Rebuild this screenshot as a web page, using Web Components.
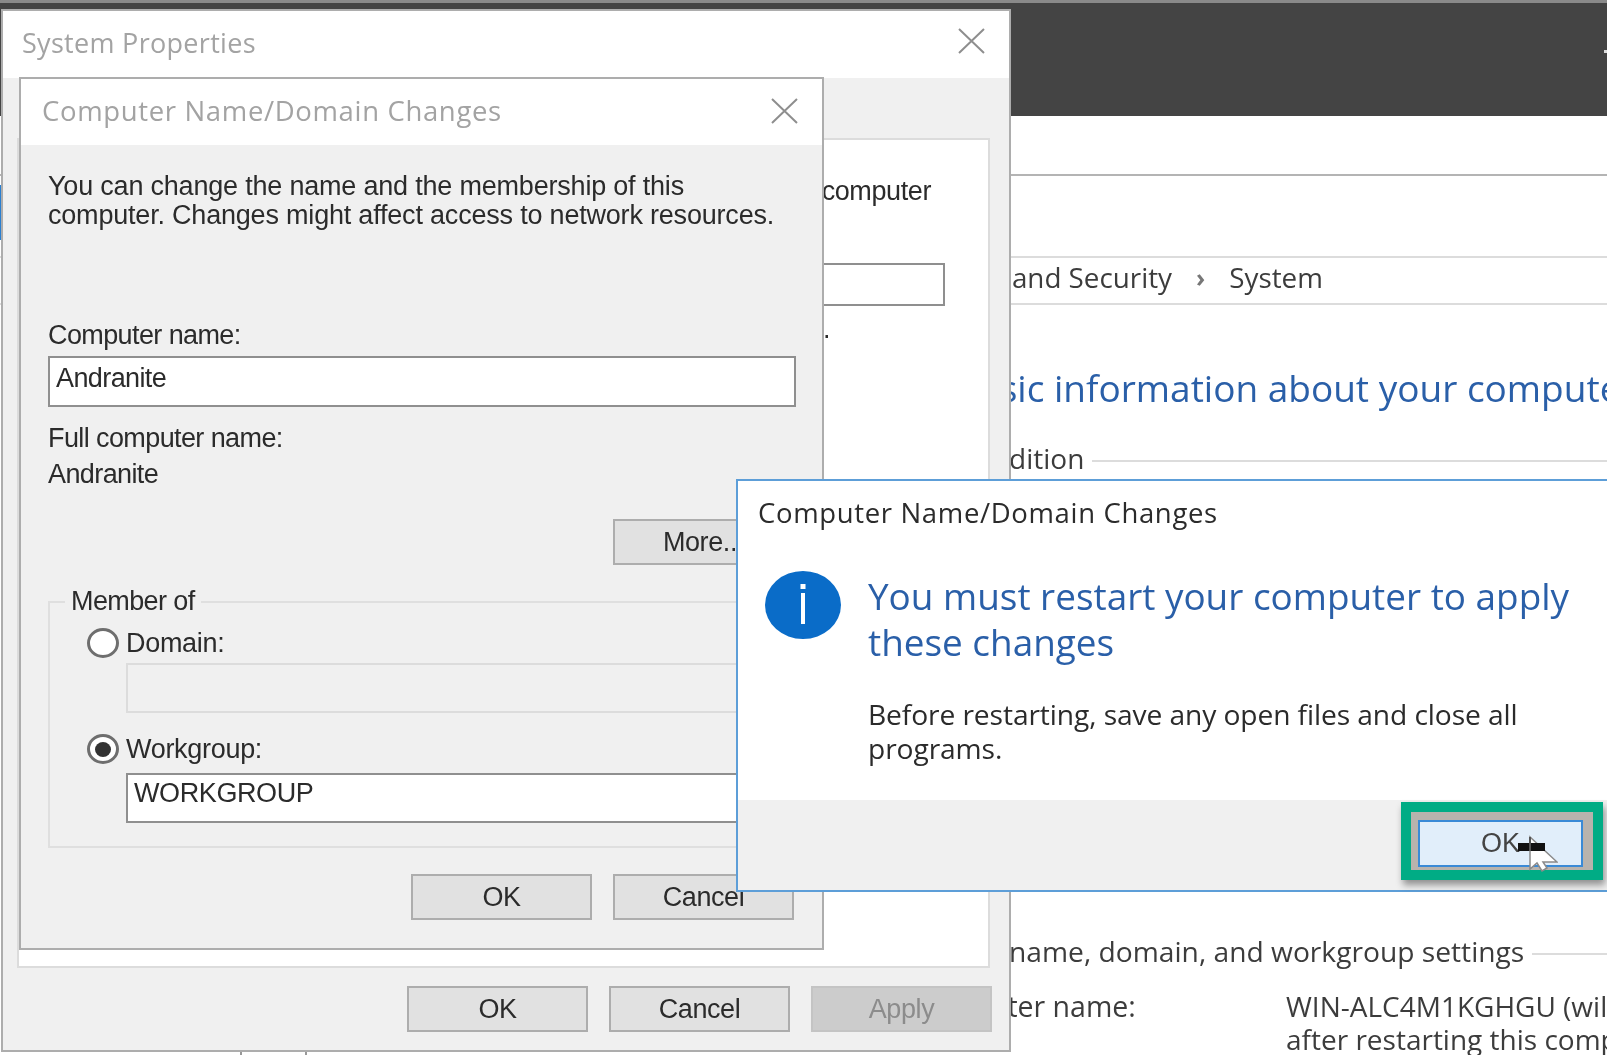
<!DOCTYPE html>
<html>
<head>
<meta charset="utf-8">
<title>System Properties</title>
<style>
  html, body { margin: 0; padding: 0; width: 1607px; height: 1055px; overflow: hidden; background: #fff; }
</style>
</head>
<body>
<sys-desktop>
  <panel-page></panel-page>

  <win-dialog style="left:1px;top:9px;width:1010px;height:1043px;--head:67px;--title:27px;--track:0.3px;--pad:24px;--lead:19px;--x-top:0px;--x-bottom:4px" heading="System Properties">
    <props-tab></props-tab>
    <div slot="footer">
      <win-button>OK</win-button>
      <win-button>Cancel</win-button>
      <win-button disabled>Apply</win-button>
    </div>
  </win-dialog>

  <win-dialog style="left:19px;top:77px;width:805px;height:873px;--head:66px;--title:27.5px;--track:0.65px;--pad:24px;--lead:21px;--x-top:2px;--x-bottom:0px" heading="Computer Name/Domain Changes">
    <name-form></name-form>
  </win-dialog>

  <restart-dialog></restart-dialog>
</sys-desktop>

<script>
class SysDesktop extends HTMLElement {
    constructor() {
        super();
        this.shadowDOM = this.attachShadow({ mode: "open" });
        this.shadowDOM.innerHTML = `
        <style>
        :host {
            display: block;
            position: relative;
            width: 1607px;
            height: 1055px;
            overflow: hidden;
            filter: blur(0.7px);
        }
        </style>
        <slot></slot>`;
    }
}

class PanelPage extends HTMLElement {
    constructor() {
        super();
        this.shadowDOM = this.attachShadow({ mode: "open" });
        this.shadowDOM.innerHTML = `
        <style>
        :host {
            display: block;
            position: relative;
            width: 1607px;
            height: 1055px;
            background: #fff;
            font-family: "Open Sans", "Noto Sans", sans-serif;
            color: #3c3c3c;
        }
        .top {
            height: 113px;
            background: #444;
            border-top: 3px solid #8a8a8a;
            display: flex;
            justify-content: flex-end;
            align-items: center;
        }
        .tick { width: 3px; height: 3px; background: #ddd; margin-top: -16px; }
        .search { height: 58px; border-bottom: 2px solid #b4b4b4; margin-bottom: 80px; }
        .crumbs {
            box-sizing: border-box;
            height: 49px;
            border: solid #dcdcdc;
            border-width: 2px 0;
            display: flex;
            align-items: center;
            white-space: nowrap;
            font-size: 27.8px;
            padding: 0 0 8px 911px;
        }
        .crumbs i { font-style: normal; font-weight: 700; color: #777; font-size: 25px; margin: 0 24px; }
        h1 {
            margin: 61px 0 0 866px;
            font-size: 37px;
            line-height: 44px;
            font-weight: 400;
            color: #2a5fa8;
            white-space: nowrap;
        }
        .sec {
            display: flex;
            align-items: center;
            gap: 8px;
            white-space: nowrap;
            font-size: 28px;
            line-height: 36px;
        }
        .sec::after { content: ""; flex: 1; height: 2px; margin-top: 5px; background: #dcdcdc; }
        .edition { margin: 30px 0 0 867px; }
        .name { margin: 457px 0 0 869px; font-size: 28.2px; }
        .row {
            display: flex;
            margin: 21px 0 0 911px;
            font-size: 28.5px;
            line-height: 33px;
            white-space: nowrap;
        }
        .row b { flex: none; font-weight: 400; width: 375px; }
        .row span { font-size: 28px; }
        .rail { position: absolute; left: 0; top: 185px; width: 1px; height: 55px; background: #2a7fd0; }
        .foot { position: absolute; top: 1052px; width: 2px; height: 3px; background: #999; }
        </style>
        <div class="top"><span class="tick"></span></div>
        <div class="search"></div>
        <div class="crumbs">System and Security<i>›</i>System</div>
        <h1>View basic information about your computer</h1>
        <div class="sec edition">Windows edition</div>
        <div class="sec name">Computer name, domain, and workgroup settings</div>
        <div class="row"><b>Computer name:</b><span>WIN-ALC4M1KGHGU (will change<br>after restarting this computer)</span></div>
        <span class="rail"></span>
        <span class="foot" style="left:240px"></span>
        <span class="foot" style="left:305px"></span>`;
    }
}

class WinDialog extends HTMLElement {
    constructor() {
        super();
        this.shadowDOM = this.attachShadow({ mode: "open" });
    }

    connectedCallback() {
        this.render();
    }

    render() {
        this.shadowDOM.innerHTML = `
        <style>
        * { box-sizing: border-box; }
        :host {
            display: flex;
            flex-direction: column;
            position: absolute;
            box-sizing: border-box;
            background: #f0f0f0;
            border: 2px solid #adadad;
            font-family: "Liberation Sans", Arial, sans-serif;
        }
        header {
            height: var(--head);
            flex: none;
            background: #fff;
            display: flex;
            align-items: center;
            justify-content: space-between;
            padding: 0 var(--pad) 4px var(--lead);
            font-family: "Open Sans", "Noto Sans", sans-serif;
            font-size: var(--title);
            color: #a3a3a3;
            letter-spacing: var(--track);
        }
        svg { width: 27px; height: 26px; margin: var(--x-top) 0 var(--x-bottom); }
        .body { flex: 1; min-height: 0; }
        ::slotted([slot="footer"]) {
            display: flex;
            justify-content: flex-end;
            gap: 21px;
            padding: 0 17px 18px 0;
        }
        </style>
        <header>
            <span>${this.getAttribute("heading")}</span>
            <svg viewBox="0 0 27 26"><path d="M1 1 L26 25 M26 1 L1 25" stroke="#8e8e8e" stroke-width="2" fill="none"/></svg>
        </header>
        <div class="body"><slot></slot></div>
        <slot name="footer"></slot>`;
    }
}

class WinButton extends HTMLElement {
    constructor() {
        super();
        this.shadowDOM = this.attachShadow({ mode: "open" });
        this.shadowDOM.innerHTML = `
        <style>
        :host {
            display: flex;
            align-items: center;
            justify-content: center;
            box-sizing: border-box;
            width: 181px;
            height: 46px;
            background: #e1e1e1;
            border: 2px solid #adadad;
            font-family: "Liberation Sans", Arial, sans-serif;
            font-size: 27px;
            color: #2b2b2b;
            letter-spacing: -0.4px;
        }
        :host([disabled]) {
            background: #ccc;
            border-color: #c4c4c4;
            color: #8c8c8c;
        }
        </style>
        <slot></slot>`;
    }
}

class WinField extends HTMLElement {
    constructor() {
        super();
        this.shadowDOM = this.attachShadow({ mode: "open" });
        this.shadowDOM.innerHTML = `
        <style>
        :host {
            display: flex;
            align-items: center;
            box-sizing: border-box;
            height: 50px;
            background: #fff;
            border: 2px solid #8f8f8f;
            padding: 0 0 6px 6px;
            font-family: "Liberation Sans", Arial, sans-serif;
            font-size: 27px;
            color: #2b2b2b;
            letter-spacing: -0.6px;
        }
        :host([disabled]) {
            background: #f0f0f0;
            border-color: #dcdcdc;
        }
        </style>
        <slot></slot>`;
    }
}

class WinRadio extends HTMLElement {
    constructor() {
        super();
        this.shadowDOM = this.attachShadow({ mode: "open" });
        this.shadowDOM.innerHTML = `
        <style>
        :host {
            display: flex;
            align-items: center;
            gap: 7px;
            height: 30px;
            font-size: 27px;
            letter-spacing: -0.3px;
            color: #2b2b2b;
        }
        .dot {
            box-sizing: border-box;
            width: 32px;
            height: 30px;
            border-radius: 50%;
            background: #fff;
            border: 3px solid #6e6e6e;
            display: flex;
            align-items: center;
            justify-content: center;
        }
        :host([checked]) .dot::after {
            content: "";
            width: 16px;
            height: 15px;
            border-radius: 50%;
            background: #333;
        }
        </style>
        <span class="dot"></span><slot></slot>`;
    }
}

class PropsTab extends HTMLElement {
    constructor() {
        super();
        this.shadowDOM = this.attachShadow({ mode: "open" });
        this.shadowDOM.innerHTML = `
        <style>
        * { box-sizing: border-box; }
        :host {
            display: block;
            box-sizing: border-box;
            height: 830px;
            margin: 60px 19px 18px 14px;
            background: #fff;
            border: 2px solid #dcdcdc;
            padding: 36px 43px 0 0;
            font-size: 27px;
            letter-spacing: -0.4px;
            color: #2b2b2b;
            text-align: right;
            white-space: nowrap;
        }
        .intro { margin-right: 14px; line-height: 30px; }
        .desc {
            margin-top: 57px;
            height: 43px;
            background: #fff;
            border: 2px solid #8f8f8f;
        }
        .hint { margin: 8px 115px 0 0; line-height: 30px; }
        </style>
        <div class="intro">computer</div>
        <div class="desc"></div>
        <div class="hint">.</div>`;
    }
}

class NameForm extends HTMLElement {
    constructor() {
        super();
        this.shadowDOM = this.attachShadow({ mode: "open" });
        this.shadowDOM.innerHTML = `
        <style>
        * { box-sizing: border-box; }
        :host {
            display: block;
            padding: 27px 26px 0 27px;
            font-size: 27px;
            line-height: 29px;
            letter-spacing: -0.6px;
            color: #2b2b2b;
        }
        p { margin: 0; white-space: nowrap; }
        .intro { letter-spacing: -0.2px; }
        .label { margin-top: 91px; }
        .computer { margin-top: 6px; height: 51px; margin-left: 0; }
        .full { margin-top: 17px; }
        .value { margin-top: 7px; }
        .more { display: flex; justify-content: flex-end; margin: 30px 2px 0 0; }
        fieldset {
            margin: 22px 0 0 0;
            padding: 0 20px 25px 37px;
            border: 2px solid #dfdfdf;
            height: 261px;
        }
        legend { padding: 0 6px; margin-left: -22px; }
        .domain { margin-top: 12px; }
        win-field { margin-left: 39px; }
        .off { margin-top: 5px; }
        .wg { margin-top: 21px; }
        .on { margin-top: 9px; padding-bottom: 10px; letter-spacing: -0.4px; }
        .actions { display: flex; justify-content: flex-end; gap: 21px; margin: 26px 2px 0 0; }
        </style>
        <p class="intro">You can change the name and the membership of this<br>computer. Changes might affect access to network resources.</p>
        <p class="label">Computer name:</p>
        <win-field class="computer">Andranite</win-field>
        <p class="full">Full computer name:</p>
        <p class="value">Andranite</p>
        <div class="more"><win-button>More...</win-button></div>
        <fieldset>
            <legend>Member of</legend>
            <win-radio class="domain">Domain:</win-radio>
            <win-field class="off" disabled></win-field>
            <win-radio class="wg" checked>Workgroup:</win-radio>
            <win-field class="on">WORKGROUP</win-field>
        </fieldset>
        <div class="actions"><win-button>OK</win-button><win-button>Cancel</win-button></div>`;
    }
}

class RestartDialog extends HTMLElement {
    constructor() {
        super();
        this.shadowDOM = this.attachShadow({ mode: "open" });
        this.shadowDOM.innerHTML = `
        <style>
        * { box-sizing: border-box; }
        :host {
            display: flex;
            flex-direction: column;
            position: absolute;
            left: 736px;
            top: 479px;
            width: 900px;
            height: 413px;
            box-sizing: border-box;
            background: #fff;
            border: 2px solid #5d9ed8;
            font-family: "Open Sans", "Noto Sans", sans-serif;
        }
        .title {
            padding: 14px 0 0 20px;
            font-size: 27.5px;
            line-height: 36px;
            color: #2b2b2b;
            letter-spacing: 0.65px;
        }
        .main { display: flex; flex: 1; padding: 42px 0 0 27px; }
        .icon { flex: none; width: 76px; height: 68px; margin-top: -2px; }
        .msg { margin-left: 27px; }
        h2 {
            margin: 0;
            font-size: 36.9px;
            line-height: 46px;
            font-weight: 400;
            color: #2a5fa8;
            white-space: nowrap;
        }
        p {
            margin: 32px 0 0;
            font-size: 28.2px;
            line-height: 34px;
            color: #2b2b2b;
            letter-spacing: -0.1px;
            white-space: nowrap;
        }
        footer {
            height: 90px;
            flex: none;
            background: #f0f0f0;
            display: flex;
            justify-content: flex-end;
            padding: 2px 31px 0 0;
        }
        .mark {
            position: relative;
            width: 202px;
            height: 78px;
            border: 10px solid #00ac85;
            background: #b8b3ad;
            padding: 8px 10px 0 7px;
            box-shadow: 2px 5px 7px rgba(0, 0, 0, .4);
        }
        .ok {
            height: 47px;
            background: #e1eefa;
            border: 2px solid #3a8ad6;
            display: flex;
            align-items: center;
            justify-content: center;
            font-size: 27px;
            color: #444;
            font-family: "Liberation Sans", Arial, sans-serif;
        }
        .cursor { position: absolute; left: 103px; top: 21px; width: 44px; height: 40px; }
        </style>
        <div class="title">Computer Name/Domain Changes</div>
        <div class="main">
            <svg class="icon" viewBox="0 0 76 68">
                <ellipse cx="38" cy="34" rx="38" ry="34" fill="#0a6cc8"/>
                <rect x="36" y="22" width="4" height="31" fill="#fff"/>
                <rect x="35.5" y="13" width="5" height="5" fill="#fff"/>
            </svg>
            <div class="msg">
                <h2>You must restart your computer to apply<br>these changes</h2>
                <p>Before restarting, save any open files and close all<br>programs.</p>
            </div>
        </div>
        <footer>
            <div class="mark">
                <div class="ok">OK</div>
                <svg class="cursor" viewBox="0 0 44 40">
                    <path d="M16 4 L16 36 L23 30 L28 38 L33 35 L29 29 L43 29 Z" fill="#fff" stroke="#8a8a8a" stroke-width="1.5"/>
                    <rect x="4" y="10" width="27" height="8" fill="#111"/>
                    <rect x="15" y="4" width="2" height="14" fill="#555"/>
                </svg>
            </div>
        </footer>`;
    }
}

customElements.define("sys-desktop", SysDesktop);
customElements.define("panel-page", PanelPage);
customElements.define("win-dialog", WinDialog);
customElements.define("win-button", WinButton);
customElements.define("win-field", WinField);
customElements.define("win-radio", WinRadio);
customElements.define("props-tab", PropsTab);
customElements.define("name-form", NameForm);
customElements.define("restart-dialog", RestartDialog);
</script>
</body>
</html>
